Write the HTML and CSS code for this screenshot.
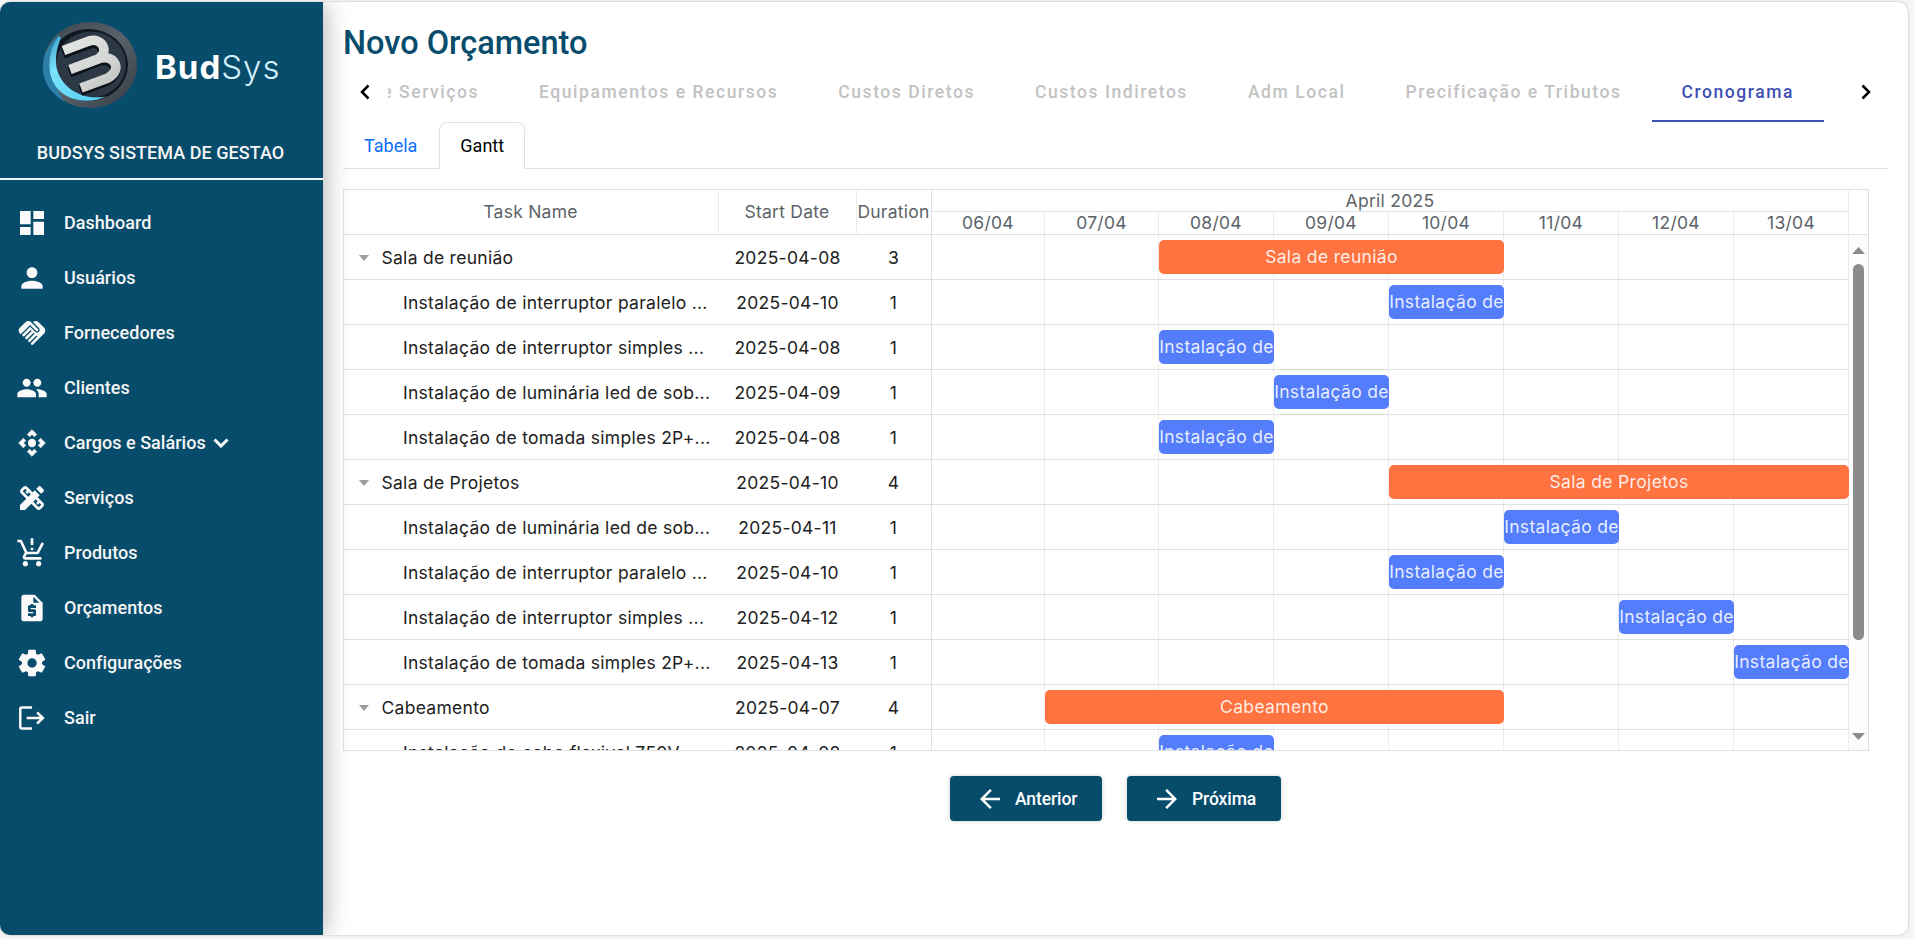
FILE: index.html
```html
<!DOCTYPE html>
<html lang="pt-BR">
<head>
<meta charset="utf-8">
<title>BudSys - Novo Orçamento</title>
<link rel="stylesheet" href="styles.css">
</head>
<body>
<div class="app">
  <aside class="sidebar">
    <div class="brand">
      <svg class="brand-mark" viewBox="0 0 96 88" width="96" height="88">
        <defs>
          <linearGradient id="ring" x1="0" y1="0" x2="1" y2="1"><stop offset="0" stop-color="#3c444e"/><stop offset=".5" stop-color="#59616b"/><stop offset="1" stop-color="#343b45"/></linearGradient>
          <linearGradient id="glow" x1="0" y1="0" x2=".7" y2="1"><stop offset="0" stop-color="#3a9cc6"/><stop offset=".4" stop-color="#7be3fb"/><stop offset="1" stop-color="#5cd3f5"/></linearGradient>
          <linearGradient id="metal" x1="0" y1="0" x2="1" y2="1"><stop offset="0" stop-color="#e4e6e4"/><stop offset=".6" stop-color="#d3d6d3"/><stop offset="1" stop-color="#c0c3c0"/></linearGradient>
        </defs>
        <ellipse cx="48" cy="44" rx="47" ry="43" fill="url(#ring)"/>
        <path d="M18 13C-6 32-5 65 22 80C8 60 6 36 18 13Z" fill="#2c7fa8"/>
        <ellipse cx="46.500" cy="44" rx="39.500" ry="36" fill="#10161f"/>
        <ellipse cx="49" cy="43.500" rx="35" ry="33" fill="#2d3846"/>
        <path d="M17 15C4 32 3 58 20 72C32 81 50 82 64 75.500C50 78 36 75 26 66C12 53 11 36 19 17Z" fill="url(#glow)"/>
        <g fill="none">
          <path d="M21.500 30 47 20.500C60 16 68 31 56 38L28 49M56 38C71 32 82 48 66 57L39 67.500" transform="translate(-.5 2.500)" stroke="#0b1119" stroke-width="10"/>
          <path d="M21.500 29.500 47 20C60 16 68 31 56 38L28 48.500M56 38C71 32 82 48 66 57L39 67" stroke="url(#metal)" stroke-width="9.700"/>
        </g>
      </svg>
      <div class="brand-name"><b class="brand-bud">Bud</b><span class="brand-sys">Sys</span></div>
    </div>
    <div class="company">BUDSYS SISTEMA DE GESTAO</div>
    <nav class="menu">
      <a class="menu-item"><svg class="icon" viewBox="0 0 24 24"><path d="M3 13h8V3H3v10zm0 8h8v-6H3v6zm10 0h8V11h-8v10zm0-18v6h8V3h-8z"/></svg>Dashboard</a>
      <a class="menu-item"><svg class="icon" viewBox="0 0 24 24"><path d="M12 12c2.21 0 4-1.79 4-4s-1.79-4-4-4-4 1.79-4 4 1.79 4 4 4zm0 2c-2.67 0-8 1.34-8 4v2h16v-2c0-2.66-5.33-4-8-4z"/></svg>Usuários</a>
      <a class="menu-item"><svg class="icon" viewBox="0 0 24 24"><path d="M16.48 10.41c-.39.39-1.04.39-1.43 0l-4.47-4.46-7.05 7.04-.66-.63c-1.17-1.17-1.17-3.07 0-4.24l4.24-4.24c1.17-1.17 3.07-1.17 4.24 0L16.48 9c.39.39.39 1.02 0 1.41zm.7-2.12c.78.78.78 2.05 0 2.83-1.27 1.27-2.61.22-2.83 0l-3.76-3.76-5.57 5.57c-.39.39-.39 1.02 0 1.41.39.39 1.02.39 1.42 0l4.62-4.62.71.71-4.62 4.62c-.39.39-.39 1.02 0 1.41.39.39 1.02.39 1.42 0l4.62-4.62.71.71-4.62 4.62c-.39.39-.39 1.02 0 1.41.39.39 1.02.39 1.41 0l4.62-4.62.71.71-4.62 4.62c-.39.39-.39 1.02 0 1.41.39.39 1.02.39 1.41 0l8.32-8.34c1.17-1.17 1.17-3.07 0-4.24l-4.24-4.24c-1.15-1.15-3.01-1.17-4.18-.06l4.47 4.47z"/></svg>Fornecedores</a>
      <a class="menu-item"><svg class="icon" viewBox="0 0 24 24"><path d="M16 11c1.66 0 2.99-1.34 2.99-3S17.66 5 16 5c-1.66 0-3 1.34-3 3s1.34 3 3 3zm-8 0c1.66 0 2.99-1.34 2.99-3S9.66 5 8 5C6.34 5 5 6.34 5 8s1.34 3 3 3zm0 2c-2.33 0-7 1.17-7 3.5V19h14v-2.5c0-2.33-4.67-3.5-7-3.5zm8 0c-.29 0-.62.02-.97.05 1.16.84 1.97 1.97 1.97 3.45V19h6v-2.5c0-2.33-4.67-3.5-7-3.5z"/></svg>Clientes</a>
      <a class="menu-item"><svg class="icon" viewBox="0 0 24 24"><path d="M15.54 5.54L13.77 7.3 12 5.54 10.23 7.3 8.46 5.54 12 2zm2.92 10l-1.76-1.77L18.46 12l-1.76-1.77 1.76-1.77L22 12zm-10 2.92l1.77-1.76L12 18.46l1.77-1.76 1.77 1.76L12 22zm-2.92-10l1.76 1.77L5.54 12l1.76 1.77-1.76 1.77L2 12z" stroke="#fafafa" stroke-width=".5"/><circle cx="12" cy="12" r="3.100"/></svg>Cargos e Salários<svg class="caret" viewBox="0 0 16 10"><path d="M1.500 1.500 8 8 14.500 1.500"/></svg></a>
      <a class="menu-item"><svg class="icon" viewBox="0 0 24 24"><path d="M16.24 11.51l1.57-1.57-3.75-3.75-1.57 1.57-4.14-4.13c-.78-.78-2.05-.78-2.83 0l-1.9 1.9c-.78.78-.78 2.05 0 2.83l4.13 4.13L3 17.25V21h3.75l4.76-4.76 4.13 4.13c.95.95 2.23.6 2.83 0l1.9-1.9c.78-.78.78-2.05 0-2.83l-4.13-4.13zm-7.06-.44L5.04 6.94l1.89-1.9L8.2 6.31 7.02 7.5l1.41 1.41 1.19-1.19 1.45 1.45-1.89 1.9zm7.88 7.89l-4.13-4.13 1.9-1.9 1.45 1.45-1.19 1.19 1.41 1.41 1.19-1.19 1.27 1.27-1.9 1.9zM20.71 7.04c.39-.39.39-1.02 0-1.41l-2.34-2.34c-.47-.47-1.12-.29-1.41 0l-1.83 1.83 3.75 3.75 1.83-1.83z"/></svg>Serviços</a>
      <a class="menu-item"><svg class="icon" viewBox="0 0 24 24"><path d="M13 10h-2V8h2v2zm0-4h-2V1h2v5zM7 18c-1.1 0-1.99.9-1.99 2S5.9 22 7 22s2-.9 2-2-.9-2-2-2zm10 0c-1.1 0-1.99.9-1.99 2s.89 2 1.99 2 2-.9 2-2-.9-2-2-2zm-8.9-5h7.45c.75 0 1.41-.41 1.75-1.03L21 4.96 19.25 4l-3.7 7H8.53L4.27 2H1v2h2l3.6 7.59-1.35 2.44C4.52 15.37 5.48 17 7 17h12v-2H7l1.1-2z"/></svg>Produtos</a>
      <a class="menu-item"><svg class="icon" viewBox="0 0 24 24"><path d="M14 2H6c-1.1 0-1.99.9-1.99 2L4 20c0 1.1.89 2 1.99 2H18c1.1 0 2-.9 2-2V8l-6-6zm1 10h-4v1h3c.55 0 1 .45 1 1v3c0 .55-.45 1-1 1h-1v1h-2v-1H9v-2h4v-1h-3c-.55 0-1-.45-1-1v-3c0-.55.45-1 1-1h1V9h2v1h2v2zm-2-4V3.5L17.500 8H13z"/></svg>Orçamentos</a>
      <a class="menu-item"><svg class="icon" viewBox="0 0 24 24"><path fill-rule="evenodd" d="m9.250 22-.4-3.200q-.325-.125-.612-.3t-.563-.375L4.700 19.375l-2.750-4.750 2.575-1.950Q4.500 12.500 4.500 12.338v-.675q0-.163.025-.338L1.950 9.375l2.750-4.750 2.975 1.250q.275-.2.575-.375t.6-.3l.4-3.200h5.500l.4 3.200q.325.125.613.3t.562.375l2.975-1.250 2.750 4.750-2.575 1.950q.025.175.025.338v.674q0 .163-.05.338l2.575 1.950-2.750 4.750-2.950-1.250q-.275.2-.575.375t-.6.3l-.4 3.200zm2.800-6.500q1.450 0 2.475-1.025T15.550 12t-1.025-2.475T12.050 8.500q-1.475 0-2.488 1.025T8.550 12t1.013 2.475T12.050 15.500"/></svg>Configurações</a>
      <a class="menu-item"><svg class="icon icon-line" viewBox="0 0 24 24"><path d="M12 4.200H4.400Q3.200 4.200 3.200 5.400V18.600Q3.200 19.800 4.400 19.800H12M8 12H20.300M15.800 7.700 20.200 12 15.800 16.300"/></svg>Sair</a>
    </nav>
  </aside>

  <main class="content">
    <h1 class="title">Novo Orçamento</h1>

    <div class="steps">
      <svg class="chev" viewBox="0 0 10 16"><path d="M8.500 1.500 2 8l6.500 6.500"/></svg>
      <div class="steps-track">
        <span class="step">e Serviços</span><span class="step">Equipamentos e Recursos</span><span class="step">Custos Diretos</span><span class="step">Custos Indiretos</span><span class="step">Adm Local</span><span class="step">Precificação e Tributos</span><span class="step step-active">Cronograma</span>
      </div>
      <svg class="chev chev-next" viewBox="0 0 10 16"><path d="M1.500 1.500 8 8l-6.500 6.500"/></svg>
    </div>

    <div class="tabs">
      <span class="tab">Tabela</span><span class="tab tab-active">Gantt</span>
    </div>

    <section class="gantt">
      <div class="table">
        <div class="table-head"><span>Task Name</span><span>Start Date</span><span>Duration</span></div>
        <div class="row group"><span class="name">Sala de reunião</span><span>2025-04-08</span><span>3</span></div>
        <div class="row"><span class="name">Instalação de interruptor paralelo ...</span><span>2025-04-10</span><span>1</span></div>
        <div class="row"><span class="name">Instalação de interruptor simples ...</span><span>2025-04-08</span><span>1</span></div>
        <div class="row"><span class="name">Instalação de luminária led de sob...</span><span>2025-04-09</span><span>1</span></div>
        <div class="row"><span class="name">Instalação de tomada simples 2P+...</span><span>2025-04-08</span><span>1</span></div>
        <div class="row group"><span class="name">Sala de Projetos</span><span>2025-04-10</span><span>4</span></div>
        <div class="row"><span class="name">Instalação de luminária led de sob...</span><span>2025-04-11</span><span>1</span></div>
        <div class="row"><span class="name">Instalação de interruptor paralelo ...</span><span>2025-04-10</span><span>1</span></div>
        <div class="row"><span class="name">Instalação de interruptor simples ...</span><span>2025-04-12</span><span>1</span></div>
        <div class="row"><span class="name">Instalação de tomada simples 2P+...</span><span>2025-04-13</span><span>1</span></div>
        <div class="row group"><span class="name">Cabeamento</span><span>2025-04-07</span><span>4</span></div>
        <div class="row"><span class="name">Instalação de cabo flexivel 750V...</span><span>2025-04-08</span><span>1</span></div>
      </div>
      <div class="timeline">
        <div class="scale">
          <div class="month">April 2025</div>
          <div class="days"><span>06/04</span><span>07/04</span><span>08/04</span><span>09/04</span><span>10/04</span><span>11/04</span><span>12/04</span><span>13/04</span></div>
        </div>
        <div class="lane"><div class="bar project from-3 to-6">Sala de reunião</div></div>
        <div class="lane"><div class="bar from-5 to-6">Instalação de</div></div>
        <div class="lane"><div class="bar from-3 to-4">Instalação de</div></div>
        <div class="lane"><div class="bar from-4 to-5">Instalação de</div></div>
        <div class="lane"><div class="bar from-3 to-4">Instalação de</div></div>
        <div class="lane"><div class="bar project from-5 to-9">Sala de Projetos</div></div>
        <div class="lane"><div class="bar from-6 to-7">Instalação de</div></div>
        <div class="lane"><div class="bar from-5 to-6">Instalação de</div></div>
        <div class="lane"><div class="bar from-7 to-8">Instalação de</div></div>
        <div class="lane"><div class="bar from-8 to-9">Instalação de</div></div>
        <div class="lane"><div class="bar project from-2 to-6">Cabeamento</div></div>
        <div class="lane"><div class="bar from-3 to-4">Instalação de</div></div>
      </div>
      <div class="scroll">
        <div class="scroll-head"></div>
        <div class="scroll-track">
          <svg class="scroll-arrow" viewBox="0 0 13 7"><path d="M6.500 0 13 7H0z"/></svg>
          <div class="scroll-thumb"></div>
          <svg class="scroll-arrow scroll-down" viewBox="0 0 13 7"><path d="M0 0h13L6.500 7z"/></svg>
        </div>
      </div>
    </section>

    <div class="actions">
      <button class="btn"><svg viewBox="0 0 24 24"><path d="M20 11H7.830l5.590-5.590L12 4l-8 8 8 8 1.410-1.410L7.830 13H20v-2z"/></svg>Anterior</button>
      <button class="btn btn-next"><svg viewBox="0 0 24 24"><path d="m12 4-1.410 1.410L16.170 11H4v2h12.170l-5.580 5.590L12 20l8-8z"/></svg>Próxima</button>
    </div>
  </main>
</div>
</body>
</html>
```

FILE: styles.css
```css
* { box-sizing: border-box; }
body { margin: 0; height: 939px; padding: 2px 6px 4px 0; background: #f6f6f6; font-family: Roboto, sans-serif; overflow: hidden; }
.app { display: flex; width: 1908px; height: 933px; border-radius: 10px; background: #fff; overflow: hidden; box-shadow: 0 0 3px rgba(0,0,0,.25); }

.sidebar { flex: none; width: 323px; background: #084c6c; color: #f5f5f5; box-shadow: 0 0 25px rgba(0,0,0,.35); z-index: 1; }
.brand { display: flex; align-items: center; height: 126px; padding-left: 42px; }
.brand-mark { display: block; flex: none; }
.brand-name { display: flex; margin: 4px 0 0 17px; font: 33px/40px Inter, sans-serif; color: #fff; }
.brand-bud { font-weight: 700; letter-spacing: 1px; }
.brand-sys { font-weight: 300; color: #d4f1fb; letter-spacing: 1px; }
.company { height: 52px; border-bottom: 2px solid #f5f5f5; font-size: 18px; line-height: 50px; font-weight: 500; letter-spacing: .04px; text-align: center; padding-right: 2px; }
.menu { padding-top: 15px; }
.menu-item { display: flex; align-items: center; height: 55px; padding-left: 16px; font-size: 18px; font-weight: 500; letter-spacing: .03px; }
.icon { width: 32px; height: 32px; margin-right: 16px; fill: #fafafa; }
.icon-line { fill: none; stroke: #fafafa; stroke-width: 1.850; }
.caret { width: 16px; height: 10px; margin-left: 7px; fill: none; stroke: #fafafa; stroke-width: 3; }

.content { flex: 1; padding: 20px 20px 0; }
.title { margin: 0; height: 40px; font-size: 32.500px; line-height: 42px; font-weight: 500; color: #084c6c; }
.steps { display: flex; align-items: center; height: 60px; }
.chev { width: 10px; height: 16px; margin: 0 18px 0 17px; fill: none; stroke: #000; stroke-width: 2.500; }
.chev-next { margin: 0 0 0 37px; }
.steps-track { display: flex; justify-content: flex-end; width: 1436px; height: 60px; overflow: hidden; }
.step { flex: none; padding: 0 30px; font-size: 17.500px; line-height: 60px; font-weight: 500; letter-spacing: 1.555px; color: #c2c2c2; white-space: nowrap; }
.step-active { color: #3f51b5; border-bottom: 2px solid #3f51b5; }
.tabs { display: flex; height: 47px; border-bottom: 1px solid #dee2e6; }
.tab { height: 47px; padding: 0 22px 0 21px; font-size: 18px; line-height: 47px; color: #0d6efd; }
.tab-active { padding: 0 20px; border: 1px solid #dee2e6; border-bottom-color: #fff; border-radius: 8px 8px 0 0; background: #fff; color: #000; line-height: 46px; }

.gantt { display: flex; width: 1526px; height: 562px; margin-top: 20px; border: 1px solid #dfe0e1; overflow: hidden; font: 17.500px Inter, sans-serif; letter-spacing: .280px; }
.table { flex: none; width: 588px; border-right: 1px solid #dfe0e1; color: #212121; }
.table-head, .row { display: grid; grid-template-columns: 374px 138px 75px; height: 45px; border-bottom: 1px solid #dfe0e1; line-height: 45px; text-align: center; }
.table-head { color: #5c6368; line-height: 44px; letter-spacing: .250px; }
.table-head span { padding-right: 1px; }
.table-head span + span { border-left: 1px solid #ececec; }
.row .name + span { padding-left: 1px; }
.name { padding-left: 59px; text-align: left; white-space: nowrap; }
.group .name { display: flex; align-items: center; padding-left: 15px; }
.group .name::before { content: ""; margin-right: 12.500px; border: 5.500px solid transparent; border-top: 6px solid #9c9c9c; border-bottom: 0; }
.timeline { flex: none; width: 917px; }
.scale { height: 45px; border-bottom: 1px solid #dfe0e1; color: #5c6368; text-align: center; }
.month { height: 22px; border-bottom: 1px solid #dfe0e1; border-right: 1px solid #ececec; line-height: 22px; }
.days, .lane { display: grid; grid-template-columns: 113px 114px repeat(6, 115px); }
.days span { height: 22px; line-height: 21px; border-right: 1px solid #ececec; }
.lane { height: 45px; padding-top: 5px; border-bottom: 1px solid #dfe0e1;
  background: linear-gradient(#ececec, #ececec) 112px 0 / 1px 100% no-repeat, repeating-linear-gradient(to left, #ececec 0 1px, transparent 1px 115px) right / 804px 100% no-repeat; }
.bar { height: 34px; border-radius: 5px; background: #537dfb; color: rgba(255,255,255,.88); line-height: 34px; letter-spacing: .340px; text-align: center; white-space: nowrap; overflow: hidden; }
.project { background: #ff7340; }
.from-2 { grid-column-start: 2; } .from-3 { grid-column-start: 3; } .from-4 { grid-column-start: 4; } .from-5 { grid-column-start: 5; }
.from-6 { grid-column-start: 6; } .from-7 { grid-column-start: 7; } .from-8 { grid-column-start: 8; }
.to-4 { grid-column-end: 4; } .to-5 { grid-column-end: 5; } .to-6 { grid-column-end: 6; } .to-7 { grid-column-end: 7; }
.to-8 { grid-column-end: 8; } .to-9 { grid-column-end: 9; }
.scroll { width: 19px; }
.scroll-head { height: 45px; border-bottom: 1px solid #dfe0e1; }
.scroll-track { display: flex; flex-direction: column; align-items: center; height: 515px; padding-top: 12px; background: #fcfcfc; }
.scroll-arrow { flex: none; display: block; width: 13px; height: 7px; fill: #8b8b8b; }
.scroll-thumb { width: 11px; height: 376px; margin: 10px 0 93px; border-radius: 6px; background: #8b8b8b; }

.actions { display: flex; gap: 25px; margin: 25px 0 0 607px; }
.btn { display: flex; align-items: center; gap: 10px; width: 152px; height: 45px; padding: 0 0 0 25px; border: 0; border-radius: 4px; background: #084c6c; color: #fff; font: 500 17.500px Roboto, sans-serif; letter-spacing: -.100px; box-shadow: 0 0 4px rgba(0,0,0,.2); }
.btn-next { width: 154px; }
.btn svg { width: 30px; height: 30px; fill: #fff; }
```
